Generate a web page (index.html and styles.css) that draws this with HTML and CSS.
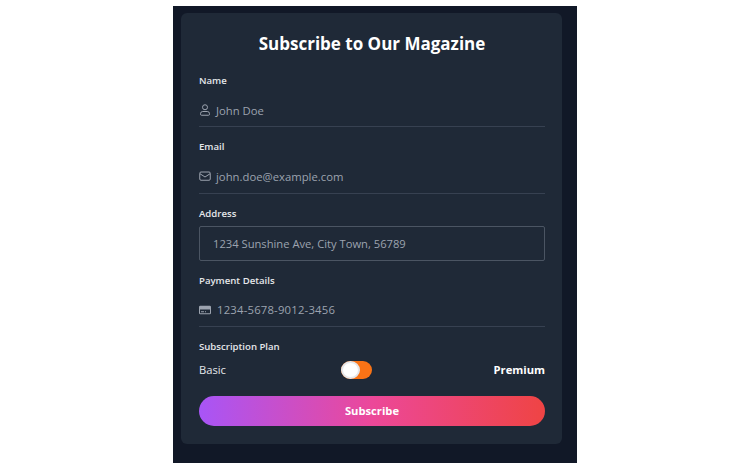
FILE: index.html
```html
<!DOCTYPE html>
<html lang="en">
<head>
    <meta charset="UTF-8">
    <meta name="viewport" content="width=device-width, initial-scale=1.0">
    <title>Subscribe to Our Magazine</title>
    <link rel="stylesheet" href="styles.css">
</head>
<body>
    <div class="frame">
        <form class="card">
            <h1>Subscribe to Our Magazine</h1>

            <div class="field">
                <label>Name</label>
                <div class="line">
                    <svg class="icon" viewBox="0 0 24 24" fill="none" stroke="currentColor" stroke-width="2"><circle cx="12" cy="6.500" r="5"/><path d="M5 22.500h14a2 2 0 0 0 2-2v-1a4.500 4.500 0 0 0-4.500-4.500h-9A4.500 4.500 0 0 0 3 19.500v1a2 2 0 0 0 2 2z"/></svg>
                    <span>John Doe</span>
                </div>
            </div>

            <div class="field">
                <label>Email</label>
                <div class="line">
                    <svg class="icon" viewBox="0 0 24 24" fill="none" stroke="currentColor" stroke-width="2"><rect x="1.500" y="4" width="21" height="16.500" rx="2.500"/><path d="M2 7.500l10 6.500 10-6.500"/></svg>
                    <span>john.doe@example.com</span>
                </div>
            </div>

            <div class="field">
                <label>Address</label>
                <div class="box">1234 Sunshine Ave, City Town, 56789</div>
            </div>

            <div class="field">
                <label>Payment Details</label>
                <div class="line">
                    <svg class="icon" viewBox="0 0 24 24" fill="currentColor"><path d="M2.500 3.500h19A2.500 2.500 0 0 1 24 6v12a2.500 2.500 0 0 1-2.500 2.500h-19A2.500 2.500 0 0 1 0 18V6a2.500 2.500 0 0 1 2.500-2.500zM2 11v7c0 .3.200.5.500.5h19c.3 0 .5-.2.500-.5v-7zM4 14.500h6v2H4zm8 0h2v2h-2z" fill-rule="evenodd"/></svg>
                    <span class="card-number">1234-5678-9012-3456</span>
                </div>
            </div>

            <div class="plan">
                <label>Subscription Plan</label>
                <div class="plan-row">
                    <span class="basic">Basic</span>
                    <span class="toggle"><span class="knob"></span></span>
                    <span class="premium">Premium</span>
                </div>
            </div>

            <button type="button">Subscribe</button>
        </form>
    </div>
</body>
</html>
```

FILE: styles.css
```css
body {
    margin: 0;
    height: 469px;
    overflow: hidden;
    background: white;
    font-family: "Open Sans", "Noto Sans", sans-serif;
}
.frame {
    box-sizing: border-box;
    width: 404px;
    height: 457px;
    margin: 6px 0 0 173px;
    padding: 7px 15px 0 8px;
    background: #111827;
}
.card {
    box-sizing: border-box;
    height: 431px;
    padding: 18px 17px 0 18px;
    background: #1f2937;
    border-radius: 6px;
}
h1 {
    margin: 0 0 16px;
    height: 26px;
    line-height: 26px;
    font-size: 17px;
    font-weight: 700;
    color: white;
    text-align: center;
}
label {
    display: block;
    height: 15px;
    line-height: 15px;
    font-size: 9.600px;
    font-weight: 600;
    color: #e5e7eb;
}
.field {
    margin-bottom: 12px;
}
.line {
    box-sizing: border-box;
    display: flex;
    align-items: center;
    gap: 5px;
    height: 39.340px;
    padding-top: 6px;
    border-bottom: 1px solid #374151;
    font-size: 11.300px;
    color: #9ca3af;
}
.card-number {
    margin-left: 1px;
    letter-spacing: 0.2px;
}
.icon {
    width: 12px;
    height: 12px;
    flex: none;
}
.box {
    box-sizing: border-box;
    height: 35px;
    margin-top: 5px;
    margin-bottom: 12px;
    padding-left: 13px;
    line-height: 33px;
    border: 1px solid #4b5563;
    border-radius: 2px;
    font-size: 11.200px;
    color: #9ca3af;
}
.plan-row {
    display: flex;
    justify-content: space-between;
    align-items: center;
    height: 22px;
    margin-top: 5px;
    font-size: 11.200px;
    color: #e5e7eb;
}
.premium {
    font-weight: 700;
    color: white;
}
.toggle {
    display: block;
    width: 31px;
    height: 18px;
    margin-right: 6px;
    background: #f97316;
    border-radius: 9px;
}
.knob {
    display: block;
    width: 19px;
    height: 18px;
    background: white;
    border: 2px solid #e5e7eb;
    box-sizing: border-box;
    border-radius: 50%;
}
button {
    display: block;
    width: 100%;
    height: 30px;
    margin-top: 15px;
    border: none;
    border-radius: 15px;
    background: linear-gradient(to right, #a855f7, #ec4899, #ef4444);
    color: white;
    font-family: inherit;
    font-size: 11.200px;
    font-weight: 700;
}
```
